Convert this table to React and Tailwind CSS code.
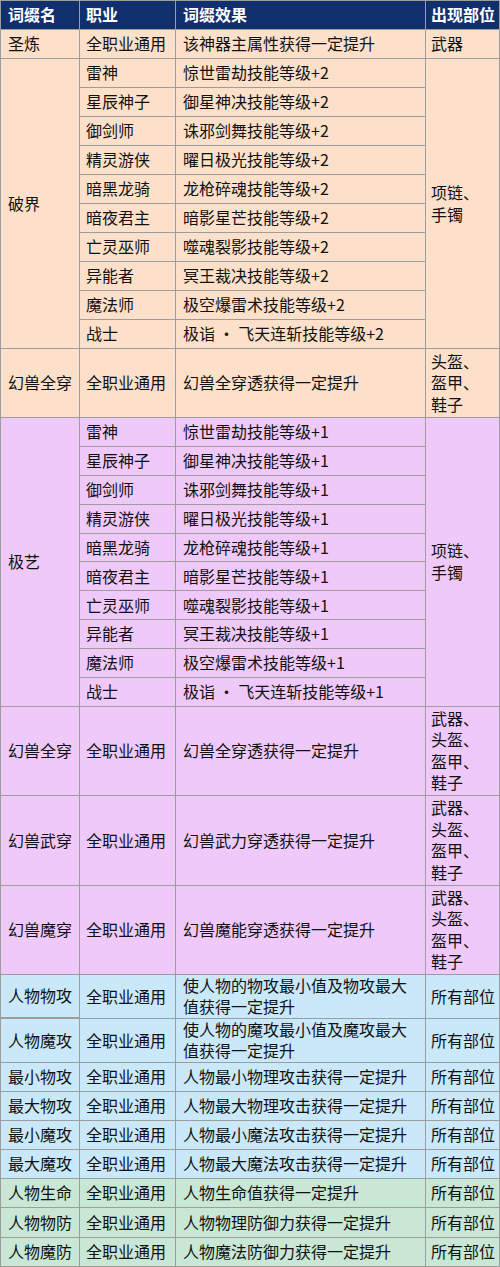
import React from 'react';

const PEACH = 'bg-[#fde0c9]';
const PURPLE = 'bg-[#efc9f9]';
const BLUE = 'bg-[#c9e8f9]';
const GREEN = 'bg-[#c8e7d5]';

const jobs = ['雷神', '星辰神子', '御剑师', '精灵游侠', '暗黑龙骑', '暗夜君主', '亡灵巫师', '异能者', '魔法师', '战士'];
const skills = ['惊世雷劫', '御星神决', '诛邪剑舞', '曜日极光', '龙枪碎魂', '暗影星芒', '噬魂裂影', '冥王裁决', '极空爆雷术', '极诣 · 飞天连斩'];

function Cell({ bg, h, span, className = '', children }) {
  const spanCls = span === 10 ? 'row-span-10' : '';
  return (
    <div className={`${bg} ${h || ''} ${spanCls} flex items-center leading-[21.5px] ${className}`}>
      <div>{children}</div>
    </div>
  );
}

function Lines({ items }) {
  return items.map((t, i) => <div key={i}>{t}</div>);
}

export default function App() {
  const simple = [
    { name: '人物物攻', effect: '使人物的物攻最小值及物攻最大值获得一定提升', bg: BLUE, h: 'h-[42px]' },
    { name: '人物魔攻', effect: '使人物的魔攻最小值及魔攻最大值获得一定提升', bg: BLUE, h: 'h-[43px]' },
    { name: '最小物攻', effect: '人物最小物理攻击获得一定提升', bg: BLUE, h: 'h-[28px]' },
    { name: '最大物攻', effect: '人物最大物理攻击获得一定提升', bg: BLUE, h: 'h-[28px]' },
    { name: '最小魔攻', effect: '人物最小魔法攻击获得一定提升', bg: BLUE, h: 'h-[28px]' },
    { name: '最大魔攻', effect: '人物最大魔法攻击获得一定提升', bg: BLUE, h: 'h-[28px]' },
    { name: '人物生命', effect: '人物生命值获得一定提升', bg: GREEN, h: 'h-[28px]' },
    { name: '人物物防', effect: '人物物理防御力获得一定提升', bg: GREEN, h: 'h-[29px]' },
    { name: '人物魔防', effect: '人物魔法防御力获得一定提升', bg: GREEN, h: 'h-[28px]' },
  ];

  const beasts = [
    { name: '幻兽全穿', effect: '幻兽全穿透获得一定提升', h: 'h-[88px]' },
    { name: '幻兽武穿', effect: '幻兽武力穿透获得一定提升', h: 'h-[89px]' },
    { name: '幻兽魔穿', effect: '幻兽魔能穿透获得一定提升', h: 'h-[88px]' },
  ];

  const c1 = 'pl-[7px]';
  const c2 = 'pl-[6px]';
  const c3 = 'pl-[7px] pr-[8px]';
  const c4 = 'pl-[5px]';

  return (
    <div className="w-[500px] bg-white text-[16px] text-[#111]" style={{ fontFamily: '"Noto Sans CJK SC", "Noto Sans", sans-serif' }}>
      <div className="grid grid-cols-[78px_95px_249px_73px] gap-px p-px bg-[#9d9d9d]">
        {/* header */}
        {['词缀名', '职业', '词缀效果', '出现部位'].map((t, i) => (
          <Cell key={t} bg="bg-[#10306d]" h="h-[28px]" className={`font-bold text-white ${[c1, c2, c3, c4][i]}`}>{t}</Cell>
        ))}

        {/* 圣炼 */}
        <Cell bg={PEACH} h="h-[28px]" className={c1}>圣炼</Cell>
        <Cell bg={PEACH} className={c2}>全职业通用</Cell>
        <Cell bg={PEACH} className={c3}>该神器主属性获得一定提升</Cell>
        <Cell bg={PEACH} className={c4}>武器</Cell>

        {/* 破界 */}
        {jobs.map((job, i) => (
          <React.Fragment key={'p' + job}>
            {i === 0 && <Cell bg={PEACH} span={10} className={c1}>破界</Cell>}
            <Cell bg={PEACH} h="h-[28px]" className={c2}>{job}</Cell>
            <Cell bg={PEACH} className={c3}>{skills[i]}技能等级+2</Cell>
            {i === 0 && <Cell bg={PEACH} span={10} className={c4}><Lines items={['项链、', '手镯']} /></Cell>}
          </React.Fragment>
        ))}

        {/* 幻兽全穿 (peach) */}
        <Cell bg={PEACH} h="h-[68px]" className={c1}>幻兽全穿</Cell>
        <Cell bg={PEACH} className={c2}>全职业通用</Cell>
        <Cell bg={PEACH} className={c3}>幻兽全穿透获得一定提升</Cell>
        <Cell bg={PEACH} className={c4}><Lines items={['头盔、', '盔甲、', '鞋子']} /></Cell>

        {/* 极艺 */}
        {jobs.map((job, i) => (
          <React.Fragment key={'j' + job}>
            {i === 0 && <Cell bg={PURPLE} span={10} className={c1}>极艺</Cell>}
            <Cell bg={PURPLE} h="h-[27.9px]" className={c2}>{job}</Cell>
            <Cell bg={PURPLE} className={c3}>{skills[i]}技能等级+1</Cell>
            {i === 0 && <Cell bg={PURPLE} span={10} className={c4}><Lines items={['项链、', '手镯']} /></Cell>}
          </React.Fragment>
        ))}

        {/* 幻兽 */}
        {beasts.map((b) => (
          <React.Fragment key={b.name}>
            <Cell bg={PURPLE} h={b.h} className={c1}>{b.name}</Cell>
            <Cell bg={PURPLE} className={c2}>全职业通用</Cell>
            <Cell bg={PURPLE} className={c3}>{b.effect}</Cell>
            <Cell bg={PURPLE} className={c4}><Lines items={['武器、', '头盔、', '盔甲、', '鞋子']} /></Cell>
          </React.Fragment>
        ))}

        {/* 人物属性 */}
        {simple.map((r) => (
          <React.Fragment key={r.name}>
            <Cell bg={r.bg} h={r.h} className={c1}>{r.name}</Cell>
            <Cell bg={r.bg} className={c2}>全职业通用</Cell>
            <Cell bg={r.bg} className={c3}>{r.effect}</Cell>
            <Cell bg={r.bg} className={c4}>所有部位</Cell>
          </React.Fragment>
        ))}
      </div>
    </div>
  );
}
